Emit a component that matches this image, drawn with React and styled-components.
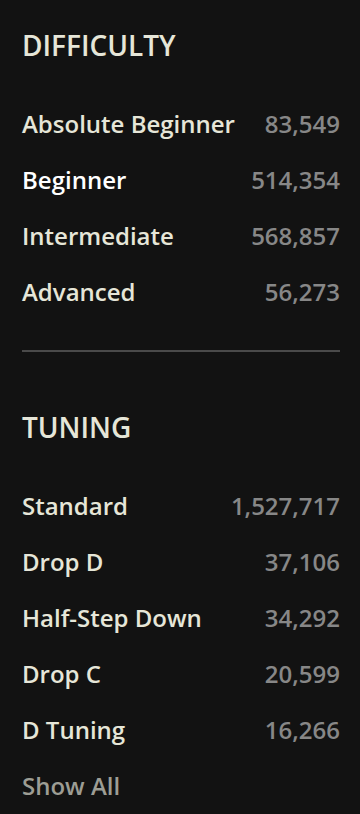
import React from 'react';
import styled, { createGlobalStyle } from 'styled-components';

const GlobalStyle = createGlobalStyle`
  html, body {
    margin: 0;
    padding: 0;
    background-color: #121212;
  }
  body {
    font-family: "Open Sans", "Noto Sans", sans-serif;
  }
`;

const Sidebar = styled.div`
  width: 360px;
  min-height: 814px;
  box-sizing: border-box;
  padding: 28px 20px 0 22px;
  background-color: #121212;
`;

const Section = styled.section`
  display: flex;
  flex-direction: column;
`;

const Heading = styled.h2`
  margin: 0 0 46px;
  font-size: 28px;
  line-height: 34px;
  font-weight: 600;
  color: #e6e6d8;
`;

const List = styled.ul`
  list-style: none;
  margin: 0;
  padding: 0;
  display: flex;
  flex-direction: column;
  gap: 24px;
`;

const Row = styled.li`
  display: flex;
  justify-content: space-between;
  align-items: baseline;
  font-size: 24px;
  line-height: 32px;
  font-weight: 600;
`;

const Label = styled.span`
  color: ${props => (props.active ? '#ffffff' : '#e6e6d8')};
`;

const Count = styled.span`
  color: #878787;
`;

const Divider = styled.hr`
  border: none;
  height: 2px;
  background-color: #4a4a4a;
  margin: 42px 0 58px;
`;

const ShowAll = styled.a`
  display: block;
  margin-top: 24px;
  font-size: 24px;
  line-height: 32px;
  font-weight: 600;
  color: #9d9d94;
  text-decoration: none;
`;

const difficulty = [
  { name: 'Absolute Beginner', count: '83,549' },
  { name: 'Beginner', count: '514,354', active: true },
  { name: 'Intermediate', count: '568,857' },
  { name: 'Advanced', count: '56,273' },
];

const tuning = [
  { name: 'Standard', count: '1,527,717' },
  { name: 'Drop D', count: '37,106' },
  { name: 'Half-Step Down', count: '34,292' },
  { name: 'Drop C', count: '20,599' },
  { name: 'D Tuning', count: '16,266' },
];

const FilterList = ({ items }) => (
  <List>
    {items.map(item => (
      <Row key={item.name}>
        <Label active={item.active}>{item.name}</Label>
        <Count>{item.count}</Count>
      </Row>
    ))}
  </List>
);

const App = () => (
  <>
    <GlobalStyle />
    <Sidebar>
      <Section>
        <Heading>DIFFICULTY</Heading>
        <FilterList items={difficulty} />
      </Section>
      <Divider />
      <Section>
        <Heading>TUNING</Heading>
        <FilterList items={tuning} />
        <ShowAll href="#">Show All</ShowAll>
      </Section>
    </Sidebar>
  </>
);

export default App;
